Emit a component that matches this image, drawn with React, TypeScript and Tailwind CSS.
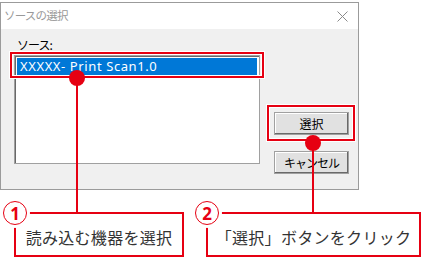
import React from 'react';

const RED = 'bg-[#e60012]';

function Callout({ num, text, className }: { num: string; text: string; className: string }) {
  return (
    <div className={`relative h-[45px] border-2 border-[#e60012] bg-white flex items-center justify-center ${className}`}>
      {/* circled number sits on the top-left corner */}
      <div className="absolute -left-[13px] -top-[13px] w-[24px] h-[24px] rounded-full border-[1.5px] border-[#e60012] bg-white shadow-[0_0_0_3px_white] flex items-center justify-center text-[#e60012] text-[17px] font-bold leading-none font-['Noto_Sans',sans-serif]">
        {num}
      </div>
      <span className="pt-[4px] text-[16px] tracking-[0.3px] text-[#333] font-['Noto_Sans_CJK_JP',sans-serif] leading-none">
        {text}
      </span>
    </div>
  );
}

export default function App() {
  return (
    <div className="relative w-[421px] h-[259px] bg-white overflow-hidden font-['Noto_Sans_CJK_JP',sans-serif]">
      {/* Dialog */}
      <div className="mt-[2px] w-[359px] h-[188px] border border-[#9b9b9b] flex flex-col">
        <div className="h-[26px] bg-white flex items-center justify-between pl-[3px] pr-[10px]">
          <span className="text-[11.5px] text-[#999] tracking-[-0.8px]">ソースの選択</span>
          <svg width="11" height="11" viewBox="0 0 11 11" className="mt-[1px]">
            <path d="M0.5 0.5 L10.5 10.5 M10.5 0.5 L0.5 10.5" stroke="#8a8a8a" strokeWidth="1" />
          </svg>
        </div>
        <div className="flex-1 bg-[#f0f0f0] pl-[13px] pt-[9px]">
          <div className="pl-[3px] h-[14px] text-[12px] leading-[14px] text-black tracking-[-1px]">ソース:</div>
          <div className="mt-[3px] flex">
            <div className="w-[246px] h-[109px] bg-white border border-[#a0a0a0] shadow-[inset_1px_1px_0_#696969] p-[2px]">
              <div className="h-[17px] bg-[#0078d7] text-white text-[13px] leading-[17px] pl-[3px] font-['Noto_Sans',sans-serif] tracking-[0.6px]">
                XXXXX- Print Scan1.0
              </div>
            </div>
            <div className="ml-[14px] pt-[57px] flex flex-col gap-[16px]">
              <button className="w-[75px] h-[23px] bg-[#e1e1e1] border border-[#a0a0a0] shadow-[inset_-1px_-1px_0_#696969,inset_1px_1px_0_#fff] text-[12px] text-black">
                選択
              </button>
              <button className="w-[75px] h-[23px] bg-[#e1e1e1] border border-[#a0a0a0] shadow-[inset_-1px_-1px_0_#696969,inset_1px_1px_0_#fff] text-[12px] text-black tracking-[-1px]">
                キャンセル
              </button>
            </div>
          </div>
        </div>
      </div>

      {/* Callouts */}
      <div className="mt-[22px] flex">
        <Callout num="1" text="読み込む機器を選択" className="ml-[14px] w-[170px]" />
        <Callout num="2" text="「選択」ボタンをクリック" className="ml-[22px] w-[215px]" />
      </div>

      {/* Annotation overlays */}
      <div className="absolute left-[10px] top-[52px] w-[254px] h-[26px] border-2 border-[#e60012] shadow-[inset_0_0_0_1px_white,0_0_0_1px_white]" />
      <div className="absolute left-[267px] top-[105px] w-[88px] h-[36px] border-2 border-[#e60012] shadow-[inset_0_0_0_1px_white,0_0_0_1px_white]" />

      <div className={`absolute left-[76px] top-[78px] w-[2px] h-[135px] ${RED}`} />
      <div className={`absolute left-[69px] top-[70px] w-[16px] h-[16px] rounded-full ${RED}`} />

      <div className={`absolute left-[312px] top-[143px] w-[2px] h-[70px] ${RED}`} />
      <div className={`absolute left-[305px] top-[135px] w-[16px] h-[16px] rounded-full ${RED}`} />
    </div>
  );
}
